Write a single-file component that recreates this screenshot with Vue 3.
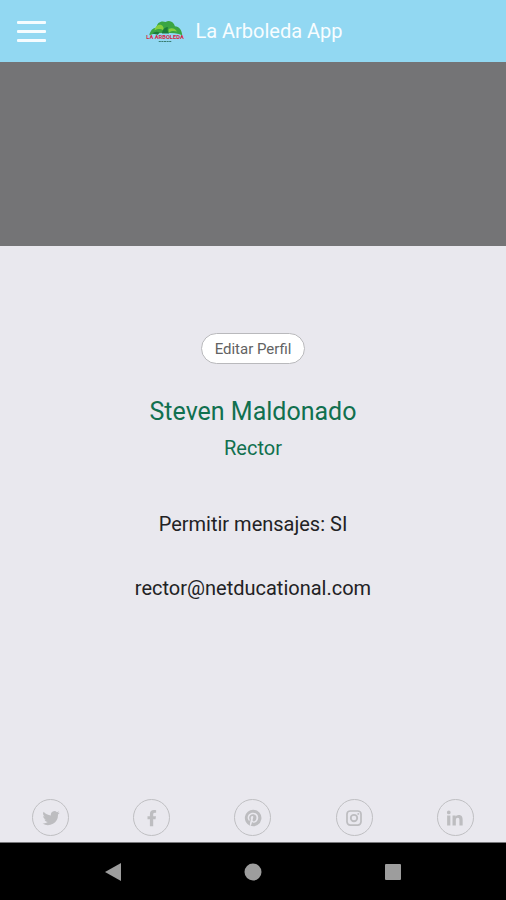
<script setup>
import { ref } from 'vue';

const profile = ref({
  name: 'Steven Maldonado',
  role: 'Rector',
  allowMessages: true,
  email: 'rector@netducational.com'
});

const socialLinks = [
  {
    name: 'Twitter',
    path: 'M23.6 4.9c-.8.4-1.7.6-2.7.8 1-.6 1.7-1.5 2-2.6-.9.5-1.9.9-3 1.1a4.7 4.7 0 0 0-8 4.3C8 8.3 4.5 6.4 2.2 3.6a4.7 4.7 0 0 0 1.5 6.3c-.8 0-1.500-.2-2.1-.6v.1c0 2.3 1.6 4.2 3.8 4.6-.7.2-1.4.2-2.1.1.6 1.9 2.3 3.2 4.4 3.3A9.5 9.5 0 0 1 .7 19.3 13.4 13.4 0 0 0 21.3 7.4c.9-.7 1.7-1.5 2.3-2.5Z'
  },
  {
    name: 'Facebook',
    path: 'M9.2 23V13.5H6V9.7h3.2V6.9c0-3.6 2.1-5.5 5.4-5.5 1.5 0 2.9.2 2.9.2v3.3h-1.7c-1.7 0-2.2 1-2.2 2.1v2.7h3.7l-.6 3.8h-3.1V23Z'
  },
  {
    name: 'Pinterest',
    path: 'M12 1a11 11 0 0 0-4 21.2c-.1-.9-.2-2.2 0-3.2l1.3-5.5s-.3-.7-.3-1.6c0-1.5.9-2.7 2-2.7.9 0 1.4.7 1.4 1.6 0 1-.6 2.4-.9 3.7-.3 1.1.5 2 1.6 2 2 0 3.5-2.1 3.5-5.1 0-2.7-1.9-4.5-4.7-4.5a4.9 4.9 0 0 0-5.1 4.9c0 1 .4 2 .8 2.6l-.4 1.5c-1.4-.6-2.3-2.6-2.3-4.2 0-3.5 2.5-6.7 7.3-6.7 3.8 0 6.8 2.7 6.8 6.4 0 3.8-2.4 6.8-5.7 6.8-1.1 0-2.2-.6-2.5-1.3l-.7 2.6c-.3 1-.9 2.2-1.4 2.9A11 11 0 1 0 12 1Z'
  },
  {
    name: 'Instagram',
    path: 'M7 1.5h10A5.5 5.5 0 0 1 22.5 7v10a5.5 5.5 0 0 1-5.5 5.5H7A5.5 5.5 0 0 1 1.5 17V7A5.5 5.5 0 0 1 7 1.5Zm0 2.3A3.2 3.2 0 0 0 3.8 7v10A3.2 3.2 0 0 0 7 20.2h10a3.2 3.2 0 0 0 3.2-3.2V7A3.2 3.2 0 0 0 17 3.8ZM12 6.5a5.5 5.5 0 1 1 0 11 5.5 5.5 0 0 1 0-11Zm0 2.4a3.1 3.1 0 1 0 0 6.2 3.1 3.1 0 0 0 0-6.2Zm5.7-3.7a1.3 1.3 0 1 1 0 2.6 1.3 1.3 0 0 1 0-2.6Z'
  },
  {
    name: 'LinkedIn',
    path: 'M1.5 8.5h4.3V22H1.5ZM3.7 2a2.5 2.5 0 1 1 0 5 2.5 2.5 0 0 1 0-5ZM8.7 8.5h4.1v1.9c.6-1.1 2-2.3 4.1-2.3 4.4 0 5.3 2.9 5.3 6.6V22h-4.3v-6.6c0-1.6 0-3.6-2.2-3.6s-2.6 1.7-2.6 3.5V22H8.7Z'
  }
];
</script>

<template>
  <div class="profile-page">
    <header class="profile-header">
      <button type="button" class="menu-button" aria-label="Menú">
        <span class="menu-line" />
        <span class="menu-line" />
        <span class="menu-line" />
      </button>
      <div class="brand">
        <svg class="brand-logo" viewBox="0 0 76 44" aria-hidden="true">
          <path fill="#3aa543" d="M8 29c2-8 6-14 14-14C22 5 31 1 39 4c8-5 16 0 18 8 8 0 13 7 14 17-17-6-44-6-63 0Z" />
          <path fill="#86cf3e" d="M18 20c1-8 7-13 14-10 3 2 4 6 3 10-6-4-11-3-17 0Zm27-3c6-3 13-1 16 5-7-2-12-1-16 2Z" />
          <path fill="#1c7a39" d="M32 26c1-8 6-13 12-12-2 4-1 8 2 12Zm-18 0c4-4 9-5 14-2l-4 4Z" />
          <text x="38" y="37" text-anchor="middle" class="brand-logo-name">LA ARBOLEDA</text>
          <path stroke="#397c70" stroke-width="2" stroke-dasharray="4 1" d="M26 41h25" />
        </svg>
        <h1 class="brand-title">La Arboleda App</h1>
      </div>
    </header>

    <div class="profile-cover" />

    <main class="profile-body">
      <button type="button" class="edit-button">Editar Perfil</button>
      <h2 class="profile-name">{{ profile.name }}</h2>
      <p class="profile-role">{{ profile.role }}</p>
      <p class="profile-line">Permitir mensajes: {{ profile.allowMessages ? 'SI' : 'NO' }}</p>
      <p class="profile-line">{{ profile.email }}</p>
    </main>

    <footer class="social-bar">
      <a v-for="link in socialLinks" :key="link.name" href="#" class="social-link" :aria-label="link.name">
        <svg viewBox="0 0 24 24" aria-hidden="true">
          <path :d="link.path" fill-rule="evenodd" />
        </svg>
      </a>
    </footer>

    <nav class="system-nav" aria-label="Sistema">
      <button type="button" class="system-button" aria-label="Atrás">
        <svg viewBox="0 0 18 18" aria-hidden="true"><path d="M1 9 17 0v18Z" /></svg>
      </button>
      <button type="button" class="system-button" aria-label="Inicio">
        <svg viewBox="0 0 18 18" aria-hidden="true"><circle cx="9" cy="9" r="8.5" /></svg>
      </button>
      <button type="button" class="system-button" aria-label="Recientes">
        <svg viewBox="0 0 18 18" aria-hidden="true"><rect x="1" y="1" width="16" height="16" rx="1" /></svg>
      </button>
    </nav>
  </div>
</template>

<style>
body {
  margin: 0;
}
</style>

<style scoped>
.profile-page {
  display: flex;
  flex-direction: column;
  min-height: 100vh;
  color: #222224;
  background: #e9e8ee;
  font-family: Roboto, 'Liberation Sans', sans-serif;
}

button {
  padding: 0;
  background: transparent;
  border: 0;
  font-family: inherit;
  cursor: pointer;
}

.profile-header {
  display: flex;
  align-items: center;
  height: 62px;
  padding: 0 64px 0 17px;
  background: #92d8f2;
}

.menu-button {
  display: grid;
  gap: 6px;
  width: 29px;
}

.menu-line {
  height: 3px;
  background: #f5fcff;
  border-radius: 1px;
}

.brand {
  display: flex;
  flex: 1;
  align-items: center;
  justify-content: center;
  gap: 10px;
}

.brand-logo {
  width: 40px;
  height: 23px;
}

.brand-logo-name {
  fill: #d8263f;
  font-size: 11px;
  font-weight: 700;
}

.brand-title {
  margin: 0;
  color: #f8fdff;
  font-size: 20px;
  font-weight: 400;
  line-height: 24px;
}

.profile-cover {
  height: 184px;
  background: #747476;
}

.profile-body {
  display: flex;
  flex: 1;
  flex-direction: column;
  align-items: center;
  padding-top: 87px;
  text-align: center;
}

.edit-button {
  height: 31px;
  padding: 0 13px;
  color: #626262;
  background: #ffffff;
  border: 1px solid #b9b9bc;
  border-radius: 16px;
  font-size: 15px;
}

.profile-name {
  margin: 32px 0 0;
  color: #11704f;
  font-size: 25px;
  font-weight: 400;
  line-height: 32px;
}

.profile-role {
  margin: 8px 0 0;
  color: #11704f;
  font-size: 20px;
  line-height: 24px;
}

.profile-line {
  margin: 52px 0 0;
  font-size: 20px;
  line-height: 24px;
}

.profile-line + .profile-line {
  margin-top: 40px;
}

.social-bar {
  display: grid;
  grid-template-columns: repeat(5, 1fr);
  justify-items: center;
  padding-bottom: 6px;
}

.social-link {
  display: grid;
  place-items: center;
  box-sizing: border-box;
  width: 37px;
  height: 37px;
  color: #bdbdc0;
  border: 1px solid #bfbfc2;
  border-radius: 50%;
}

.social-link svg {
  width: 18px;
  height: 18px;
  fill: currentColor;
}

.system-nav {
  display: grid;
  grid-template-columns: repeat(3, 1fr);
  height: 57px;
  padding: 0 43px;
  background: #000000;
  border-top: 1px solid #77777a;
}

.system-button {
  display: grid;
  place-items: center;
}

.system-button svg {
  width: 18px;
  height: 18px;
  fill: #9d9d9d;
}
</style>
